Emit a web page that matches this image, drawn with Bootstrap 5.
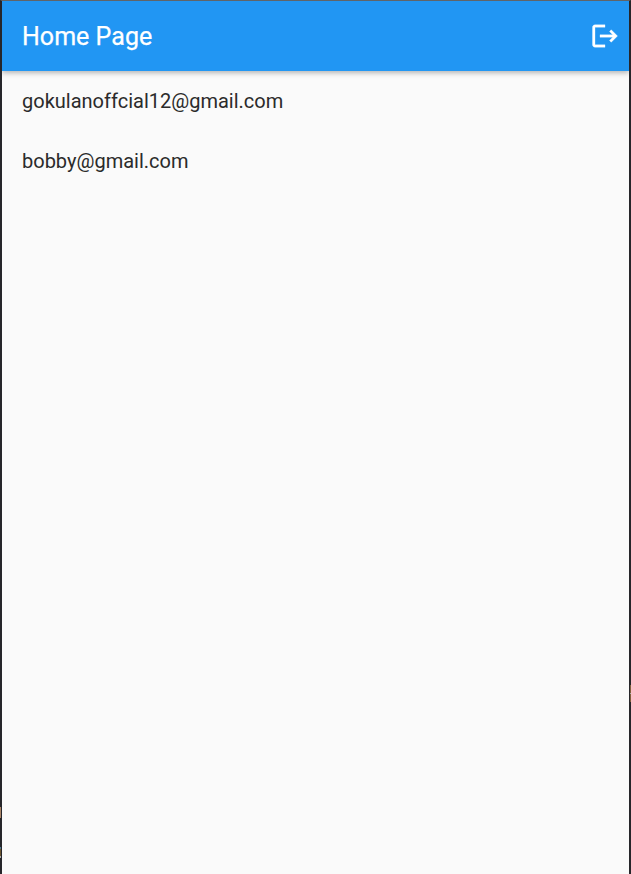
<!DOCTYPE html>
<html lang="en">
<head>
<meta charset="utf-8">
<meta name="viewport" content="width=device-width, initial-scale=1">
<title>Home Page</title>
<link href="https://cdn.jsdelivr.net/npm/bootstrap@5.3.0/dist/css/bootstrap.min.css" rel="stylesheet">
<style>
body{font-family:Roboto,sans-serif;background:#fafafa}
.app{border:solid;border-color:#606468 #26262a #26262a;border-width:1px 2px 0;background:#fafafa}
.app-bar{height:70px;background:#2196f3;box-shadow:0 2px 5px rgba(0,0,0,.28);padding:0 9px 0 20px}
.app-title{font-size:25px;font-weight:400;line-height:30px;letter-spacing:.03px;padding-top:1px;-webkit-text-stroke:.25px #fff}
.mail{height:60px;padding:0 20px;font-size:20px;color:#2b2b2b}
.edge-mark{width:1px}
.mark-tan{top:807px;height:11px;background:#a98467}
.mark-gold{top:847px;height:11px;background:linear-gradient(#4e7892 0 2px,#6b5530 2px 9px,#aaa 9px)}
.mark-right{top:685px;height:17px;background:linear-gradient(#805f3d 0 8px,#aaa 8px 9px,#805f3d 9px)}
</style>
</head>
<body>
<div class="app vh-100 overflow-hidden d-flex flex-column">
<header class="app-bar navbar flex-nowrap text-white">
<h1 class="app-title mb-0">Home Page</h1>
<button class="btn p-0 border-0 text-white d-flex" aria-label="Log out"><svg width="30" height="30" viewBox="0 0 24 24" fill="currentColor" stroke="currentColor" stroke-width=".25"><path d="M17 7l-1.41 1.41L18.17 11H8v2h10.17l-2.58 2.58L17 17l5-5zM4 5h8V3H4c-1.1 0-2 .9-2 2v14c0 1.1.9 2 2 2h8v-2H4V5z"/></svg></button>
</header>
<ul class="list-unstyled m-0">
<li class="mail d-flex align-items-center">gokulanoffcial12@gmail.com</li>
<li class="mail d-flex align-items-center">bobby@gmail.com</li>
</ul>
</div>
<i class="edge-mark mark-tan position-absolute start-0"></i>
<i class="edge-mark mark-gold position-absolute start-0"></i>
<i class="edge-mark mark-right position-absolute end-0"></i>
<script src="https://cdn.jsdelivr.net/npm/bootstrap@5.3.0/dist/js/bootstrap.bundle.min.js"></script>
</body>
</html>
